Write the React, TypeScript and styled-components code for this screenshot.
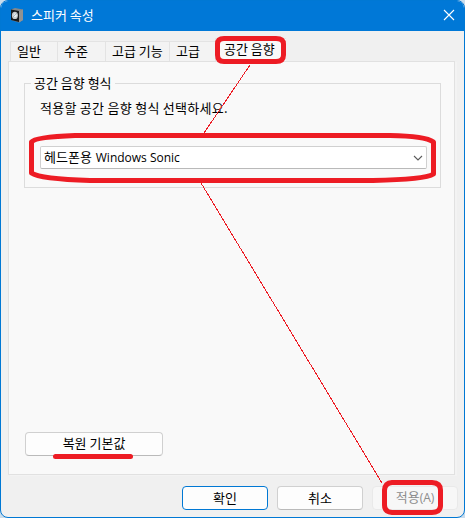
import React from "react";
import styled, { createGlobalStyle } from "styled-components";

const GlobalStyle = createGlobalStyle`
  * { box-sizing: border-box; }
  html, body { margin: 0; background: #c9dcec; }
  button { font: inherit; }
`;

const Window = styled.main`
  position: relative;
  display: flex;
  flex-direction: column;
  width: 465px;
  height: 518px;
  overflow: hidden;
  border: 1px solid #0078d4;
  border-radius: 8px;
  background: #f0f0f0;
  color: #000;
  font: 13px/18px "Noto Sans CJK KR", sans-serif;
  white-space: nowrap;
`;

const TitleBar = styled.header`
  display: flex;
  flex: none;
  align-items: center;
  height: 30px;
  margin: 0 -1px;
  padding: 0 10px 2px 11px;
  background: #0078d7;
  color: #fff;
`;

const Title = styled.h1`
  flex: 1;
  margin: 0 0 0 7px;
  font: inherit;
`;

const CloseButton = styled.button`
  display: flex;
  padding: 0;
  border: 0;
  background: none;
`;

const TabList = styled.nav`
  display: flex;
  flex: none;
  align-items: flex-end;
  height: 30px;
  padding-left: 9px;
`;

const Tab = styled.button<{ $width: number; $active?: boolean }>`
  width: ${(p) => p.$width}px;
  height: ${(p) => (p.$active ? 23 : 20)}px;
  margin: 0;
  padding: ${(p) => (p.$active ? "0 0 4px 8px" : "0 0 2px 6px")};
  border: 1px solid #e3e3e3;
  border-width: 1px 0 0 1px;
  background: ${(p) => (p.$active ? "#f9f9f9" : "#f3f3f3")};
  color: inherit;
  line-height: 17px;
  text-align: left;
`;

const Panel = styled.section`
  display: flex;
  flex: none;
  flex-direction: column;
  justify-content: space-between;
  align-items: flex-start;
  width: 447px;
  height: 414px;
  margin-left: 7px;
  padding: 12px 15px 18px;
  border: 1px solid #e1e1e1;
  background: #f9f9f9;
  box-shadow: 2px 1px 0 #f3f3f3;
`;

const Group = styled.fieldset`
  width: 417px;
  height: 114px;
  margin: 0;
  padding: 6px 13px 0 15px;
  border: 1px solid #dcdcdc;
`;

const Legend = styled.legend`
  height: 19px;
  margin-left: -9px;
  padding: 0 3px 0 3px;
`;

const Hint = styled.p`
  margin: 0 0 29px;
  letter-spacing: 0.27px;
`;

const Select = styled.div`
  display: flex;
  align-items: center;
  justify-content: space-between;
  width: 387px;
  height: 23px;
  padding: 0 3px 0 3px;
  border: 1px solid #d0d0d0;
  border-bottom-color: #b9b9b9;
  border-radius: 2px;
  background: #fff;
`;

const Latin = styled.span`
  font-family: "Open Sans", sans-serif;
  font-size: 12px;
`;

const ProductName = styled(Latin)`
  margin-left: 1px;
`;

const Button = styled.button<{ $width: number; $kind?: "primary" | "disabled" }>`
  width: ${(p) => p.$width}px;
  height: 24px;
  padding: 0 0 1px;
  border: 1px solid ${(p) => (p.$kind === "primary" ? "#0078d4" : p.$kind === "disabled" ? "#e9e9e9" : "#d0d0d0")};
  border-bottom-color: ${(p) => (p.$kind ? undefined : "#bababa")};
  border-radius: 4px;
  background: ${(p) => (p.$kind === "disabled" ? "#f7f7f7" : "#fdfdfd")};
  color: ${(p) => (p.$kind === "disabled" ? "#8c8c8c" : "#000")};
  line-height: 20px;
`;

const RestoreButton = styled(Button)`
  margin-left: 1px;
  padding-bottom: 3px;
`;

const Footer = styled.footer`
  display: flex;
  justify-content: flex-end;
  gap: 9px;
  padding: 11px 7px 0 0;
  margin-right: -1px;
`;

const Annotations = styled.svg`
  position: absolute;
  inset: -1px auto auto -1px;
  pointer-events: none;
`;

const SpeakerIcon = () => (
  <svg width="13" height="15" viewBox="0 0 13 15">
    <path d="M0 1.5 4 0 12 1.5V12L8 14.500 0 12z" fill="#85888b" />
    <path d="M8 3 12 1.5V12L8 14.5z" fill="#929292" />
    <path d="M0 1.500 8 3V14L0 12z" fill="#17191b" />
    <ellipse cx="3.9" cy="7.4" rx="3" ry="3.7" fill="#c6cacc" />
    <ellipse cx="4.2" cy="7.3" rx="1.5" ry="2" fill="#edf2f4" />
    <path d="M2 9 5.8 5" stroke="#9ba7ae" strokeWidth=".8" />
  </svg>
);

export default function App() {
  return (
    <>
      <GlobalStyle />
      <Window>
        <TitleBar>
          <SpeakerIcon />
          <Title>스피커 속성</Title>
          <CloseButton aria-label="닫기">
            <svg width="12" height="12" viewBox="0 0 12 12">
              <path d="m1 1 10 10M11 1 1 11" stroke="#fff" strokeWidth="1.1" />
            </svg>
          </CloseButton>
        </TitleBar>
        <TabList>
          <Tab $width={47}>일반</Tab>
          <Tab $width={48}>수준</Tab>
          <Tab $width={64}>고급 기능</Tab>
          <Tab $width={46}>고급</Tab>
          <Tab $width={71} $active>공간 음향</Tab>
        </TabList>
        <Panel>
          <Group>
            <Legend>공간 음향 형식</Legend>
            <Hint>적용할 공간 음향 형식 선택하세요.</Hint>
            <Select>
              <span>헤드폰용 <ProductName>Windows Sonic</ProductName></span>
              <svg width="10" height="6" viewBox="0 0 10 6">
                <path d="m1 1 4 4 4-4" fill="none" stroke="#5c5c5c" strokeWidth="1.1" />
              </svg>
            </Select>
          </Group>
          <RestoreButton $width={138}>복원 기본값</RestoreButton>
        </Panel>
        <Footer>
          <Button $width={86} $kind="primary">확인</Button>
          <Button $width={86}>취소</Button>
          <Button $width={86} $kind="disabled">적용<Latin>(A)</Latin></Button>
        </Footer>
        <Annotations width="465" height="518" viewBox="0 0 465 518" fill="none" stroke="#ed1c24">
          <g strokeWidth="5" strokeLinejoin="round" strokeLinecap="round">
            <path d="M224 38.5H276Q283.5 38.5 283.5 44V55Q283.5 61.5 276 61.5H224Q217.5 61.5 217.5 55V44Q217.5 38.5 224 38.5Z" />
            <path d="M75 135.5H390Q425 136 433.5 142V174Q425 179.5 373 180.5H90Q40 179 31.5 173V142Q35 137 75 135.5Z" />
            <path d="M392 482.5H432Q440.5 483 440.5 490V506Q440 512.5 432 512.5H392Q384.5 512 384.5 505V490Q385 483 392 482.5Z" />
            <path d="M55.5 456.5H130.5" />
          </g>
          <path d="M250 65 204 133M201 183 382 483" strokeWidth="1" shapeRendering="crispEdges" />
        </Annotations>
      </Window>
    </>
  );
}
